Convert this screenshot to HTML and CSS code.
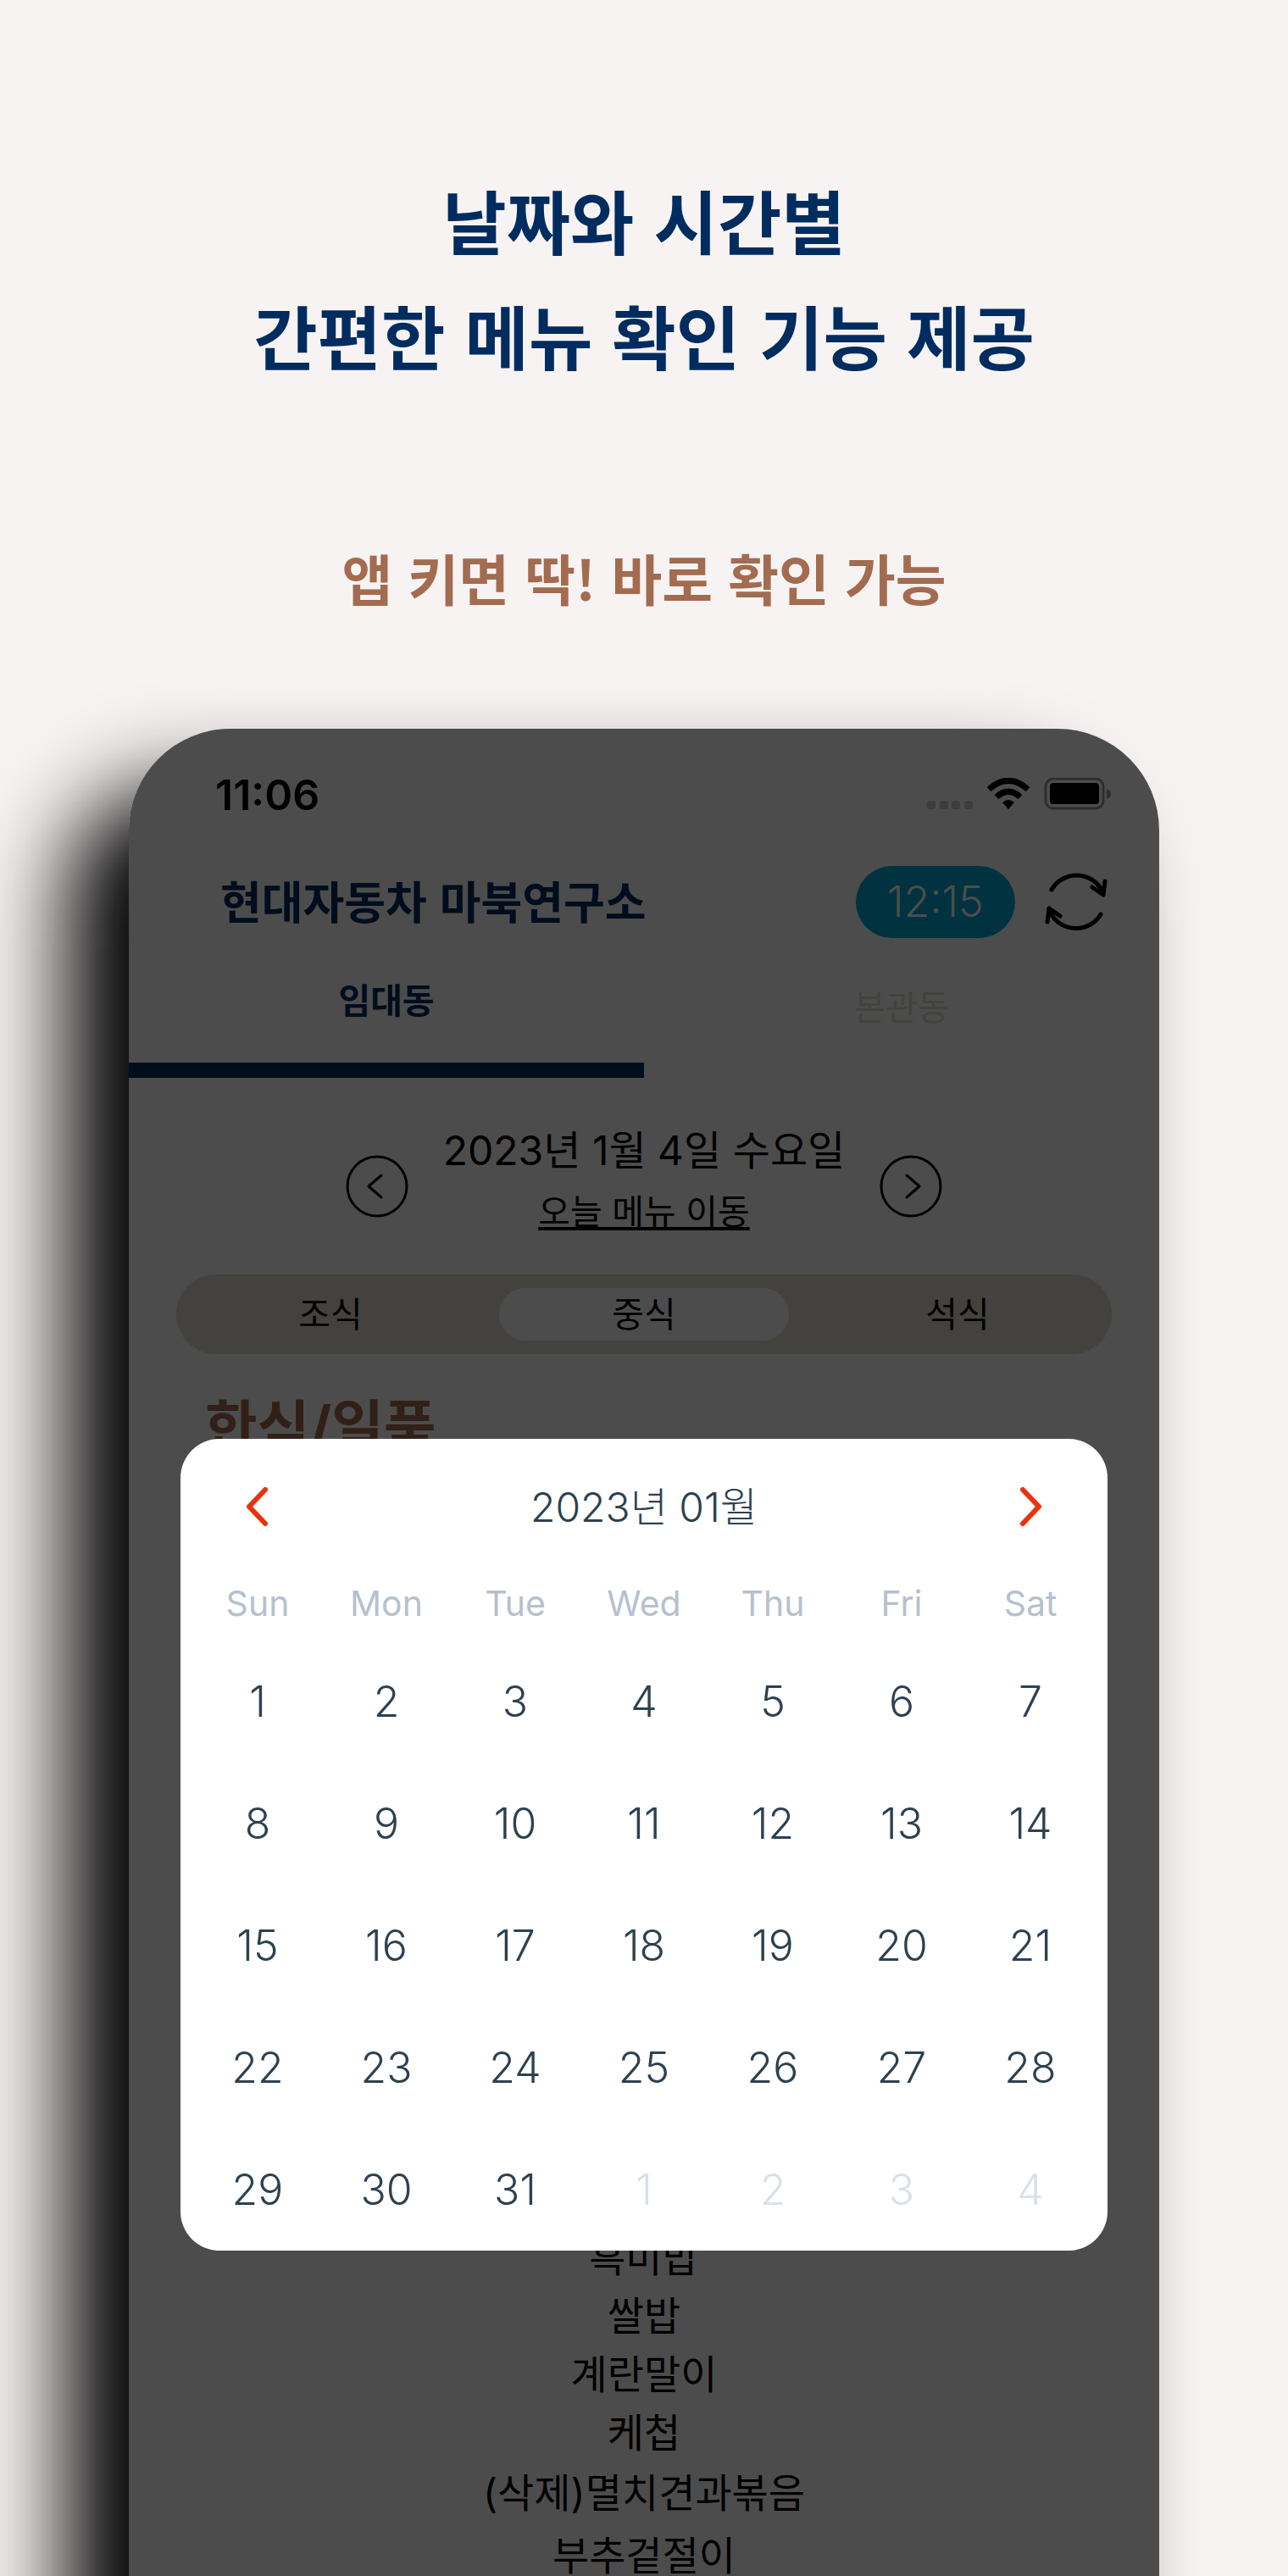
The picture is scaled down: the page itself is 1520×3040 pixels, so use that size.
FILE: index.html
```html
<!DOCTYPE html>
<html lang="ko">
<head>
<meta charset="utf-8">
<meta name="viewport" content="width=device-width, initial-scale=1">
<title>날짜와 시간별 메뉴 확인</title>
<link rel="stylesheet" href="styles.css">
</head>
<body>
<main class="promo">
  <header class="intro">
    <h1 class="headline">날짜와 시간별<br>간편한 메뉴 확인 기능 제공</h1>
    <p class="tagline">앱 키면 딱! 바로 확인 가능</p>
  </header>

  <section class="phone">
    <div class="app">
      <div class="status">
        <span class="clock">11:06</span>
        <svg class="status-icons" viewBox="0 0 220 38" aria-hidden="true">
          <g fill="#000" opacity=".2">
            <rect x="0" y="27" width="10" height="10" rx="3"/>
            <rect x="15" y="27" width="10" height="10" rx="3"/>
            <rect x="29" y="27" width="10" height="10" rx="3"/>
            <rect x="44" y="27" width="10" height="10" rx="3"/>
          </g>
          <g fill="none" stroke="#000" stroke-width="7">
            <path d="M73 13.500Q96-7 119 13.500"/>
            <path d="M82 22.500Q96 10 110 22.500"/>
          </g>
          <path d="M89 29Q96 23 103 29L96 37Z"/>
          <rect x="140" y="1" width="68" height="35" rx="9" fill="none" stroke="#000" stroke-width="3" opacity=".4"/>
          <rect x="145" y="6" width="58" height="25" rx="4"/>
          <path d="M212 13Q217 15 217 19T212 25Z" opacity=".4"/>
        </svg>
      </div>

      <div class="appbar">
        <h2 class="title">현대자동차 마북연구소</h2>
        <div class="actions">
          <button class="time" type="button">12:15</button>
          <button class="refresh" type="button" aria-label="새로고침">
            <svg viewBox="0 0 72 74" fill="none" stroke="#000" stroke-width="5" stroke-linecap="round" stroke-linejoin="round">
              <path d="M7 23A34 34 0 0 1 66 23L68 28"/><path d="M55 20L68 29L70 13"/>
              <path d="M65 52A34 34 0 0 1 6 51L4 45"/><path d="M17 54L4 45L2 61"/>
            </svg>
          </button>
        </div>
      </div>

      <nav class="tabs">
        <button class="tab tab-on" type="button">임대동</button>
        <button class="tab" type="button">본관동</button>
      </nav>

      <div class="day">
        <button class="round" type="button" aria-label="이전 날짜">
          <svg viewBox="0 0 74 74"><circle cx="37" cy="37" r="35"/><path d="M42 24L27 37L42 50"/></svg>
        </button>
        <div class="day-text">
          <span class="date">2023년 1월 4일 수요일</span>
          <a class="today" href="#today">오늘 메뉴 이동</a>
        </div>
        <button class="round" type="button" aria-label="다음 날짜">
          <svg viewBox="0 0 74 74"><circle cx="37" cy="37" r="35"/><path d="M32 24L47 37L32 50"/></svg>
        </button>
      </div>

      <div class="meals">
        <button class="meal" type="button">조식</button>
        <button class="meal meal-on" type="button">중식</button>
        <button class="meal" type="button">석식</button>
      </div>

      <h3 class="corner">한식/일품</h3>
      <ul class="menu">
        <li>흑미밥</li>
        <li>쌀밥</li>
        <li>계란말이</li>
        <li>케첩</li>
        <li>(삭제)멸치견과볶음</li>
        <li>부추겉절이</li>
      </ul>
    </div>

    <div class="overlay">
      <div class="dialog" role="dialog" aria-label="날짜 선택">
        <div class="month">
          <button class="arrow" type="button" aria-label="이전 달"><svg viewBox="0 0 26 46"><path d="M23 3L4 23L23 43"/></svg></button>
          <span class="month-name">2023년 01월</span>
          <button class="arrow" type="button" aria-label="다음 달"><svg viewBox="0 0 26 46"><path d="M3 3L22 23L3 43"/></svg></button>
        </div>
        <table class="calendar">
          <thead><tr><th>Sun</th><th>Mon</th><th>Tue</th><th>Wed</th><th>Thu</th><th>Fri</th><th>Sat</th></tr></thead>
          <tbody>
            <tr><td>1</td><td>2</td><td>3</td><td>4</td><td>5</td><td>6</td><td>7</td></tr>
            <tr><td>8</td><td>9</td><td>10</td><td>11</td><td>12</td><td>13</td><td>14</td></tr>
            <tr><td>15</td><td>16</td><td>17</td><td>18</td><td>19</td><td>20</td><td>21</td></tr>
            <tr><td>22</td><td>23</td><td>24</td><td>25</td><td>26</td><td>27</td><td>28</td></tr>
            <tr><td>29</td><td>30</td><td>31</td><td class="next">1</td><td class="next">2</td><td class="next">3</td><td class="next">4</td></tr>
          </tbody>
        </table>
      </div>
    </div>
  </section>
</main>
</body>
</html>
```
FILE: styles.css
```css
* { box-sizing: border-box; }

body {
  margin: 0;
  background: #f7f3f2;
  font-family: Inter, "Noto Sans CJK KR", sans-serif;
  color: #000;
}

h1, h2, h3, p, ul { margin: 0; padding: 0; }

button {
  border: 0;
  padding: 0;
  background: none;
  font: inherit;
  color: inherit;
}

svg { display: block; }

.promo {
  height: 100vh;
  min-height: 3040px;
  display: flex;
  flex-direction: column;
  overflow: hidden;
}

.intro {
  flex: none;
  height: 860px;
  padding-top: 191px;
  text-align: center;
  font-family: "Noto Sans CJK KR", sans-serif;
  font-weight: 700;
}

.headline {
  color: #002c5f;
  font-size: 82px;
  line-height: 136px;
}

.tagline {
  margin-top: 170px;
  color: #a36b4f;
  font-size: 65px;
  line-height: 96px;
}

.phone {
  position: relative;
  flex: 1;
  margin: 0 10% -160px;
  background: #fff;
  border-radius: 120px 120px 0 0;
  box-shadow: -72px 72px 108px #000;
  overflow: hidden;
}

.status {
  display: flex;
  justify-content: space-between;
  padding: 53px 54px 0 102px;
  height: 142px;
}

.clock {
  font-size: 50px;
  line-height: 50px;
  font-weight: 600;
}

.status-icons { width: 220px; height: 38px; margin-top: 5px; }

.appbar {
  display: flex;
  align-items: center;
  justify-content: space-between;
  height: 124px;
  padding: 0 62px 0 108px;
}

.title {
  padding-bottom: 4px;
  color: #002c5f;
  font-family: "Noto Sans CJK KR", sans-serif;
  font-size: 53px;
  line-height: 76px;
  font-weight: 700;
}

.actions { display: flex; align-items: center; gap: 36px; }

.time {
  width: 188px;
  height: 85px;
  border-radius: 43px;
  background: #00aad2;
  color: #fff;
  font-size: 50px;
  font-weight: 300;
}

.refresh svg { width: 72px; height: 74px; overflow: visible; }

.tabs { display: grid; grid-template-columns: 1fr 1fr; height: 146px; }

.tab {
  border-bottom: 18px solid transparent;
  padding-bottom: 8px;
  color: #e3dccf;
  font-size: 41px;
}

.tab-on {
  border-bottom-color: #002c5f;
  padding-bottom: 24px;
  color: #002c5f;
  font-weight: 700;
}

.day {
  display: flex;
  justify-content: center;
  align-items: center;
  gap: 41px;
  height: 232px;
  padding-top: 24px;
}

.day-text {
  display: flex;
  flex-direction: column;
  align-items: center;
  padding-bottom: 12px;
  line-height: 72px;
}

.date { font-size: 48px; }
.today { color: inherit; font-size: 41px; }

.round svg {
  width: 74px;
  height: 74px;
  fill: none;
  stroke: #000;
  stroke-width: 3;
  stroke-linecap: round;
  stroke-linejoin: round;
}

.meals {
  display: grid;
  grid-template-columns: 1fr 1fr 1fr;
  gap: 28px;
  margin: 0 56px;
  padding: 16px 11px;
  height: 94px;
  border-radius: 47px;
  background: #e3dccf;
}

.meal { border-radius: 31px; font-size: 41px; line-height: 62px; }
.meal-on { background: #fff; }

.corner {
  margin: 38px 90px 0;
  color: #a36b4f;
  font-size: 67px;
  line-height: 96px;
  font-weight: 700;
}

.menu {
  margin-top: 897px;
  list-style: none;
  text-align: center;
  font-size: 47px;
  line-height: 69px;
}

.menu li:nth-child(n+5) { line-height: 74px; }

.overlay {
  position: absolute;
  inset: 0;
  padding: 838px 61px 0;
  background: rgba(0, 0, 0, .7);
}

.dialog {
  height: 958px;
  border-radius: 46px;
  background: #fff;
  color: #2d4150;
  padding: 0 15px;
  font-weight: 300;
}

.month {
  display: flex;
  justify-content: space-between;
  align-items: center;
  height: 160px;
  padding: 0 62px;
  font-size: 48px;
}

.month-name { padding-bottom: 6px; }

.arrow svg {
  width: 26px;
  height: 46px;
  fill: none;
  stroke: #e8330f;
  stroke-width: 6;
  stroke-linecap: round;
  stroke-linejoin: round;
}

.calendar {
  width: 100%;
  table-layout: fixed;
  border-collapse: collapse;
  text-align: center;
}

.calendar th, .calendar td { padding: 0; }
.calendar th { height: 78px; padding-bottom: 10px; color: #b6c1cd; font-size: 41px; font-weight: 400; }
.calendar td { height: 144px; font-size: 50px; }
.calendar .next { color: #d9e1e8; }
```
